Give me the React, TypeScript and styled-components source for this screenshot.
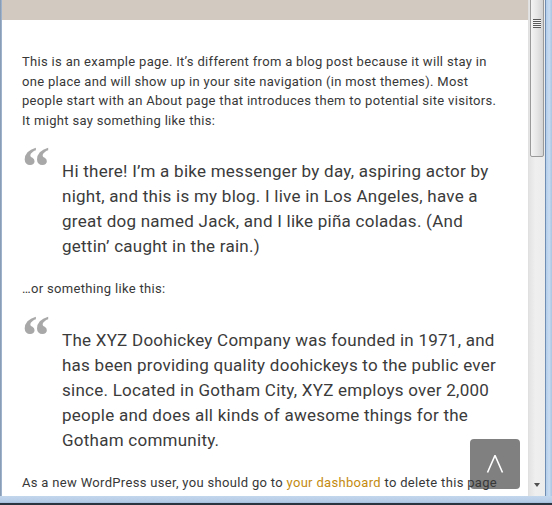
import React from "react";
import styled, { createGlobalStyle } from "styled-components";

const Global = createGlobalStyle`
  html, body { margin: 0; padding: 0; background: #fff; }
  body { width: 552px; height: 505px; overflow: hidden; }
  #root { width: 552px; height: 505px; }
`;

const Window = styled.div`
  width: 552px;
  height: 505px;
  display: flex;
  flex-direction: column;
  background: #fff;
`;

const Body = styled.div`
  flex: 1;
  display: flex;
  min-height: 0;
`;

const LeftFrame = styled.div`
  width: 2px;
  background: linear-gradient(to right, #7f93ad, #a9bdd6);
`;

const Viewport = styled.div`
  position: relative;
  width: 526px;
  overflow: hidden;
  display: flex;
  flex-direction: column;
  background: #fff;
`;

const HeaderBand = styled.div`
  height: 20px;
  flex: none;
  background: #d2cac1;
`;

const Content = styled.div`
  position: relative;
  z-index: 1;
  padding: 32px 20px 0 20px;
  font-family: Roboto, "Liberation Sans", sans-serif;
  color: #383838;
`;

const P = styled.p`
  margin: 0 0 15px 0;
  font-size: 13px;
  letter-spacing: 0.32px;
  line-height: 19.5px;
  white-space: nowrap;
`;

const Link = styled.a`
  color: #c48b10;
  text-decoration: none;
`;

const Quote = styled.blockquote`
  position: relative;
  margin: 0 0 20px 0;
  padding: 14px 0 0 40px;
  font-size: 17px;
  letter-spacing: 0.25px;
  line-height: 25px;
  color: #3b3b3b;
  white-space: nowrap;
  &::before {
    content: "\\201C";
    position: absolute;
    left: 0;
    top: -6px;
    font-family: "Liberation Serif", serif;
    font-weight: bold;
    font-size: 56px;
    line-height: 56px;
    letter-spacing: 0;
    color: #a8a8a8;
  }
`;

const TopButton = styled.div`
  position: absolute;
  z-index: 0;
  left: 468px;
  top: 439px;
  width: 50px;
  height: 50px;
  border-radius: 4px;
  background: #808080;
  display: flex;
  align-items: center;
  justify-content: center;
`;

const Scrollbar = styled.div`
  width: 17px;
  position: relative;
  background: linear-gradient(to right, #e3e3e3, #efefef 40%, #ececec);
  border-left: 1px solid #e0e0e0;
  box-sizing: border-box;
`;

const Thumb = styled.div`
  position: absolute;
  left: 1px;
  right: 1px;
  top: -2px;
  height: 159px;
  border: 1px solid #9a9a9a;
  border-radius: 2px;
  box-sizing: border-box;
  background: linear-gradient(to right, #f4f4f4, #e6e6e6 50%, #d3d3d3);
  display: flex;
  justify-content: center;
  padding-top: 20px;
`;

const Grip = styled.div`
  width: 8px;
  height: 9px;
  background: repeating-linear-gradient(to bottom, #5a5a5a 0 1px, #f6f6f6 1px 2px);
`;

const DownArrow = styled.div`
  position: absolute;
  left: 5px;
  bottom: 9px;
  width: 0;
  height: 0;
  border-left: 3.5px solid transparent;
  border-right: 3.5px solid transparent;
  border-top: 4px solid #505050;
`;

const RightFrame = styled.div`
  width: 7px;
  background: linear-gradient(to right, #6f8cb3 0 1px, #b3cdea 1px, #c9dcf1 60%, #a9c4e2);
`;

const BottomFrame = styled.div`
  height: 9px;
  flex: none;
  background: linear-gradient(to bottom, #c3d6ec, #b6cde8 60%, #a5bedc 75%, #2a3440 78%, #2a3440);
`;

export default function App() {
  return (
    <>
      <Global />
      <Window>
        <Body>
          <LeftFrame />
          <Viewport>
            <HeaderBand />
            <Content>
              <P>
                This is an example page. It’s different from a blog post because it will stay in
                <br />
                one place and will show up in your site navigation (in most themes). Most
                <br />
                people start with an About page that introduces them to potential site visitors.
                <br />
                It might say something like this:
              </P>
              <Quote>
                Hi there! I’m a bike messenger by day, aspiring actor by
                <br />
                night, and this is my blog. I live in Los Angeles, have a
                <br />
                great dog named Jack, and I like piña coladas. (And
                <br />
                gettin’ caught in the rain.)
              </Quote>
              <P>…or something like this:</P>
              <Quote>
                The XYZ Doohickey Company was founded in 1971, and
                <br />
                has been providing quality doohickeys to the public ever
                <br />
                since. Located in Gotham City, XYZ employs over 2,000
                <br />
                people and does all kinds of awesome things for the
                <br />
                Gotham community.
              </Quote>
              <P>
                As a new WordPress user, you should go to <Link href="#">your dashboard</Link> to delete this page
              </P>
            </Content>
            <TopButton>
              <svg width="18" height="18" viewBox="0 0 18 18">
                <polyline points="1.5,17.5 9,0.5 16.5,17.5" fill="none" stroke="#fff" strokeWidth="1.6" />
              </svg>
            </TopButton>
          </Viewport>
          <Scrollbar>
            <Thumb>
              <Grip />
            </Thumb>
            <DownArrow />
          </Scrollbar>
          <RightFrame />
        </Body>
        <BottomFrame />
      </Window>
    </>
  );
}
